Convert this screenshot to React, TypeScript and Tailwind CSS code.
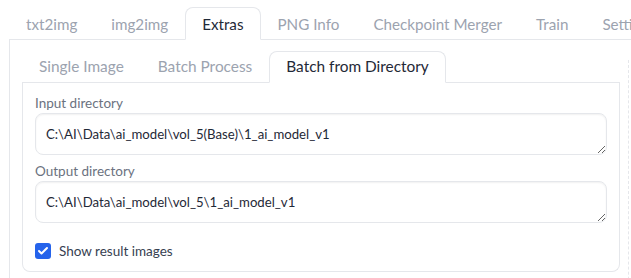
import { Check } from 'lucide-react'

const outerTabs = ['txt2img', 'img2img', 'Extras', 'PNG Info', 'Checkpoint Merger', 'Train', 'Settings']
const innerTabs = ['Single Image', 'Batch Process', 'Batch from Directory']

function Field({ label, value, className = '' }: { label: string; value: string; className?: string }) {
  return (
    <div className={className}>
      <div className="text-[13.5px] leading-5 text-[#6b7280]">{label}</div>
      <textarea
        className="block w-full h-[42px] rounded-lg border border-[#e5e7eb] px-[10px] py-[10px] text-[13.2px] leading-5 text-[#1f2937] shadow-[inset_0_1px_2px_rgba(0,0,0,0.06)] resize-y outline-none"
        defaultValue={value}
        rows={1}
      />
    </div>
  )
}

function App() {
  return (
    <div className="w-[631px] h-[278px] overflow-hidden bg-white font-['Lato',sans-serif]">
      <div className="pl-[9px] pt-[7px]">
        {/* Top tabs */}
        <div className="flex border-b border-[#e5e7eb] h-[33px]">
          {outerTabs.map((t) => (
            <div
              key={t}
              className={
                t === 'Extras'
                  ? 'h-[33px] -mb-px px-4 pt-[2px] flex items-center whitespace-nowrap rounded-t-lg border border-[#e5e7eb] border-b-white bg-white text-[15.2px] text-[#1f2937]'
                  : 'h-[33px] -mb-px px-4 pt-[2px] flex items-center whitespace-nowrap border border-transparent text-[15.2px] text-[#9ca3af]'
              }
            >
              {t}
            </div>
          ))}
        </div>

        {/* Extras panel */}
        <div className="flex border-l border-[#e5e7eb] pl-3 pt-[11px]">
          <div className="w-[598px] shrink-0">
            <div className="flex border-b border-[#e5e7eb] h-[32px]">
              {innerTabs.map((t) => (
                <div
                  key={t}
                  className={
                    t === 'Batch from Directory'
                      ? 'h-[32px] -mb-px px-4 flex items-center whitespace-nowrap rounded-t-lg border border-[#e5e7eb] border-b-white bg-white text-[15.4px] text-[#1f2937]'
                      : 'h-[32px] -mb-px px-4 flex items-center whitespace-nowrap border border-transparent text-[15.4px] text-[#9ca3af]'
                  }
                >
                  {t}
                </div>
              ))}
            </div>

            <div className="border border-t-0 border-[#e5e7eb] rounded-b-lg px-3 pt-[10px] pb-3">
              <Field label="Input directory" value={'C:\\AI\\Data\\ai_model\\vol_5(Base)\\1_ai_model_v1'} />
              <Field className="mt-[6px]" label="Output directory" value={'C:\\AI\\Data\\ai_model\\vol_5\\1_ai_model_v1'} />
              <label className="mt-5 flex items-center gap-2 h-4">
                <span className="w-4 h-4 rounded-[3px] bg-[#2563eb] flex items-center justify-center">
                  <Check className="w-3 h-3 text-white" strokeWidth={4} />
                </span>
                <span className="text-[13.5px] text-[#374151]">Show result images</span>
              </label>
            </div>
          </div>
          <div className="ml-2 mt-[9px] h-[260px] border-l border-dashed border-[#e5e7eb]" />
        </div>
      </div>
    </div>
  )
}

export default App
